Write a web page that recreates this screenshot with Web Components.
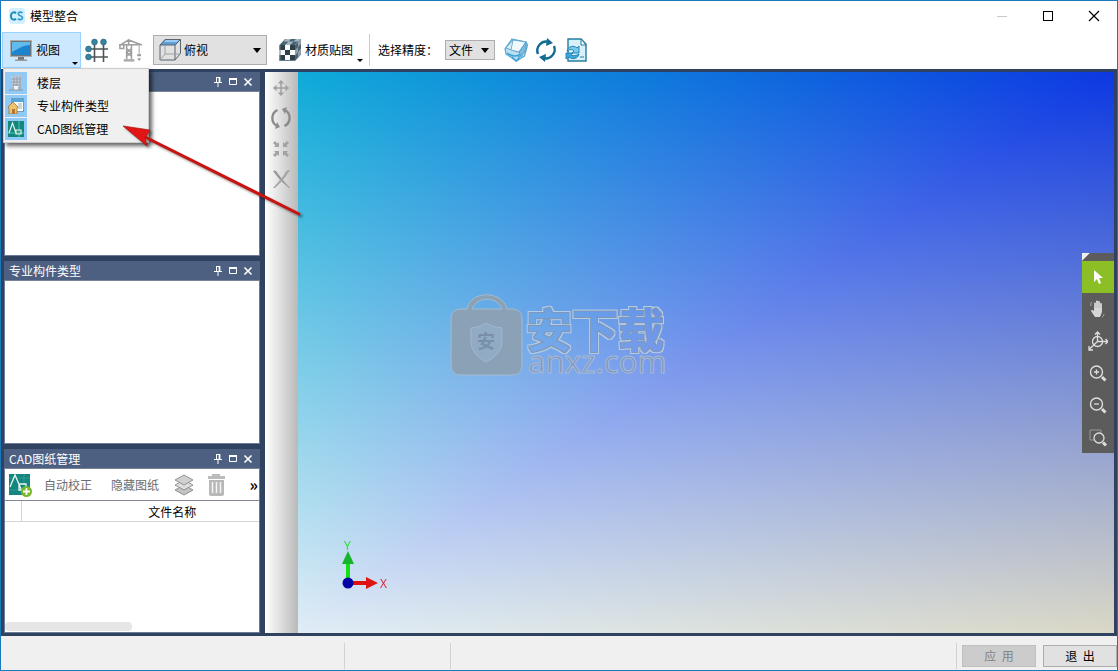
<!DOCTYPE html>
<html lang="zh-CN">
<head>
<meta charset="utf-8">
<title>模型整合</title>
<style>
html,body{height:100%;margin:0}
body{font:12px/16px "Noto Sans CJK SC","Liberation Sans",sans-serif;color:#000;overflow:hidden}
</style>
</head>
<body>
<model-app></model-app>
<script>
const ICONS = {
  logo: ['0 0 16 16', `<rect width="16" height="16" rx="3" fill="#d3effb"/><path d="M7 5.3C5.500 3.500 2 4 2 8s3.500 4.500 5 2.700" fill="none" stroke="#1687b8" stroke-width="1.800"/><path d="M13.500 4.800C12 3.600 9.300 3.800 9.300 5.800c0 2.500 4.200 1.500 4.200 4 0 2.200-3.200 2.200-4.700.8" fill="none" stroke="#2b9fd0" stroke-width="1.700"/>`],
  min: ['0 0 12 12', `<path d="M1 6.500h10" stroke="#c8c8c8"/>`],
  max: ['0 0 12 12', `<rect x="1.500" y="1.500" width="9" height="9" fill="none" stroke="#000"/>`],
  close: ['0 0 12 12', `<path d="M1 1l10 10M11 1L1 11" stroke="#000" stroke-width="1.200"/>`],
  monitor: ['0 0 24 24', `<rect x="1" y="2" width="22" height="17" fill="#6f7478"/><rect x="1.500" y="2.500" width="21" height="16" fill="none" stroke="#a9adb0"/><rect x="3" y="4" width="18" height="13" fill="#1b84cf"/><path d="M3 4h18v3C14 7 9 11 3 14z" fill="#61bbed"/><path d="M9 19h6v3H9z" fill="#777"/><path d="M6 21.500h12V23H6z" fill="#999"/>`],
  grid: ['0 0 24 24', `<path d="M5 11h18M5 19h18M9.500 5v19M18.500 5v19" stroke="#4e5457" stroke-width="1.600"/><g fill="#37849f" stroke="#235d75" stroke-width=".6"><circle cx="3.500" cy="11" r="2.900"/><circle cx="3.500" cy="19" r="2.900"/><circle cx="9.500" cy="4" r="2.900"/><circle cx="18.500" cy="4" r="2.900"/></g>`],
  crane: ['0 0 26 24', `<g fill="none" stroke="#9f9f9f" stroke-width="1.600"><path d="M1 6h24M11 1v6M3 6l8-5 13 5M2 6v4h4V6"/><path d="M9 6v15M14 6v15M9 10l5 4-5 4M14 10l-5 4 5 4"/><path d="M22 7v9" stroke-width="1"/></g><path d="M6 21h11v2.500H6z" fill="#aaa"/><path d="M20 16h4v2h-4zM20 20h4l-2 3z" fill="#999"/>`],
  cube: ['0 0 24 24', `<path d="M7 1.500h15l-4 5.500H2z" fill="#5f9fd8"/><path d="M8 2h13l-2 2H6z" fill="#9dcaf0"/><g fill="none" stroke="#59646e"><path d="M2 7h15v15H2zM2 7l5-5.500h15.500v14L17 22M17 7l5.500-5.500"/><path d="M7 7v9h15M7 16l-5 6" stroke="#9aa2a9"/></g>`],
  checker: ['0 0 24 24', `<path d="M7 1h16l-6 6H1.500z" fill="#4b6474"/><path d="M8 1h5l-2.500 2.500h-5zM18 1h5l-2.500 2.500h-5zM10.500 3.500h5L12 7H7z" fill="#a3b7c4"/><path d="M1.500 7H17v16H1.500z" fill="#fafafa"/><path d="M17 7l6-6v15.500L17 23z" fill="#506370"/><path d="M20 4l3-3v5l-3 3zM17 12l3-3v5l-3 4zM20 14l3-4v6l-3 4z" fill="#8fa0aa"/><g fill="#2e4049"><path d="M1.500 7H7v5H1.500zM12 7h5v5h-5zM7 12h5v5H7zM1.500 17H7v6H1.500zM12 17h5v6h-5z"/></g><path d="M2 7v15.500h15" fill="none" stroke="#68808d"/>`],
  box3d: ['0 0 24 24', `<path d="M8 1l14 3 1.500 3-3 11-8 5L2 16l-1-5z" fill="#b9dff3" stroke="#54a7d3" stroke-width="1.200"/><path d="M9 2L2 10l12 4 7-10z" fill="#d9f0fb" stroke="#6aacd0"/><path d="M9 2L7 12l8 2 7-10z" fill="#f0f9fd" stroke="#5a9dc6" stroke-width=".8"/><path d="M15 14l7-10v7l-5 8z" fill="#7cbbe2" stroke="#4a94c2" stroke-width=".8"/><path d="M3 15c4 3 8 4 12 2v3l-3 3-4-4" fill="none" stroke="#3aa0d6" stroke-width="1.400"/>`],
  refresh: ['0 0 24 24', `<g fill="none" stroke="#136c93" stroke-width="2.400"><path d="M4 16A9 9 0 0 1 15 4"/><path d="M20 8A9 9 0 0 1 9 20"/></g><path d="M13 0l6 5-7 3zM11 24l-6-5 7-3z" fill="#136c93"/>`],
  docsync: ['0 0 24 24', `<path d="M4 1h13l5 5v17H4z" fill="#d7f0fa" stroke="#267d9f" stroke-width="1.400"/><path d="M17 1v6h5z" fill="#fff" stroke="#267d9f"/><path d="M3 13c1-5 7-6 10-3l2-2v7H8l2-2c-2-2-4-2-7 0z" fill="#79c9eb" stroke="#1c7daf" stroke-width=".9"/><path d="M15 16c-1 5-7 6-10 3l-3 2v-6h7l-2 2c2 1 5 1 8-1z" fill="#3da7dc" stroke="#1c7daf" stroke-width=".9"/><path d="M16 19h4" stroke="#287f9f"/>`],
  floor: ['0 0 16 16', `<path d="M3 1l10-1v15H3z" fill="#c3ccd6"/><path d="M6 1v14M9 1v14M12 1v14M3 4h10M3 7h10M3 10h10M3 13h10" stroke="#8c9bab" stroke-width=".8"/><path d="M6 11h4v4H6z" fill="#f3f3f3"/><path d="M1 15h14" stroke="#7c98ae"/>`],
  component: ['0 0 16 16', `<rect x="3.500" y=".5" width="12" height="13" fill="#fff" stroke="#6aa1c2"/><path d="M4 1h11v3H4z" fill="#57a8d8"/><path d="M10 6h4M10 8h4M10 10h4" stroke="#9aa"/><path d="M0 9l5-5 5 5-1 1v6H1v-6z" fill="#edc36e" stroke="#a96b2b" stroke-width=".8"/><path d="M4 11h3v5H4z" fill="#b47832"/>`],
  cad: ['0 0 16 16', `<path d="M0 0h16v16H0z" fill="#14867d"/><path d="M0 12h16M11 0v16" stroke="#50c2ad"/><path d="M1 12L4.500 2 8 12M8 9h5v4H8z" fill="none" stroke="#e3f7ef" stroke-width="1.200"/>`],
  cadadd: ['0 0 24 24', `<path d="M1 1h21v21H1z" fill="#15857f"/><path d="M1 17h21M16 1v21M1 5h21" stroke="#2c9a8e"/><path d="M2 14L7 2l6 14M11 11h7v6h-7z" fill="none" stroke="#e9f8f4" stroke-width="1.300"/><circle cx="18.500" cy="18.500" r="5.500" fill="#79b82c"/><path d="M15 18.500h7M18.500 15v7" stroke="#fff" stroke-width="1.800"/>`],
  layers: ['0 0 24 24', `<g fill="#c4c4c4" stroke="#929292"><path d="M12 12l9 5-9 5-9-5z"/><path d="M12 7l9 5-9 5-9-5z" fill="#ddd"/><path d="M12 2l9 5-9 5-9-5z" fill="#d0d0d0"/></g>`],
  trash: ['0 0 24 24', `<path d="M8 1h8v2h5v3H4V3h4z" fill="#bbb"/><path d="M5 7h15v14q0 2-2 2H7q-2 0-2-2z" fill="#b8b8b8"/><path d="M8.500 9v11M12.500 9v11M16.500 9v11" stroke="#f4f4f4" stroke-width="1.500"/>`],
  pin: ['0 0 10 10', `<path d="M3.500 0v5.500M3 .5h4M1 5.500h8M5 5.500V10" fill="none" stroke="#fff"/><path d="M6.500 0v5" stroke="#fff" stroke-width="1.800"/>`],
  restore: ['0 0 10 10', `<path d="M1.500 1.500h7v6h-7z" fill="none" stroke="#fff"/><path d="M1 2h8" stroke="#fff" stroke-width="2"/>`],
  cross: ['0 0 10 10', `<path d="M1.500 1.500l7 7M8.500 1.500l-7 7" stroke="#fff" stroke-width="1.600"/>`],
  move: ['0 0 20 20', `<path d="M10 3v14M3 10h14" stroke="#a0a0a0" stroke-width="1.600"/><path d="M10 1l3.500 4h-7zM10 19l3.500-4h-7zM1 10l4-3.500v7zM19 10l-4-3.500v7z" fill="#a0a0a0"/>`],
  rotate: ['0 0 22 22', `<g fill="none" stroke="#8c8c8c" stroke-width="2.400"><path d="M7 19A9 9 0 0 1 7.500 3"/><path d="M15 3a9 9 0 0 1-.5 16"/></g><path d="M5 22l5-2-3-5zM17 0l-5 2 3 5z" fill="#8c8c8c"/>`],
  shrink: ['0 0 20 20', `<g fill="#a2a2a2"><path d="M8 8H3l1.500-1.500L2 4l2-2 2.500 2.500L8 3zM12 8h5l-1.500-1.500L18 4l-2-2-2.500 2.500L12 3zM8 12H3l1.500 1.500L2 16l2 2 2.500-2.500L8 17zM12 12h5l-1.500 1.500L18 16l-2 2-2.500-2.500L12 17z"/></g>`],
  del: ['0 0 20 20', `<path d="M2 2q2-1 3 0l6 8 8 9h-1L9 11z" fill="#979797"/><path d="M18 1q-3 0-5 5l-4 5-7 8 2 0 7-7 4-5q2-4 4-5z" fill="#a6a6a6"/>`],
  pointer: ['0 0 20 20', `<path d="M6 3v12l3-3 2 5 2-1-2-5h4z" fill="#fff"/>`],
  hand: ['0 0 20 20', `<path d="M7 18l-4-6q0-1.500 1.500-1L6 12V4q1-1 2 0v5V2q1-1 2 0v7V2.500q1-1 2 0V9V4.500q1-1 2 0V13l-2 5z" fill="#d6d6d6"/><path d="M7 9V4M9 9V3M11 9V3M13 9V5" stroke="#888" stroke-width=".3"/><path d="M3 7q-1-3 1-4M16 15q0 2-2 3" fill="none" stroke="#aaa"/>`],
  orbit: ['0 0 20 20', `<g fill="none" stroke="#ddd" stroke-width="1.300"><circle cx="9.500" cy="10.500" r="5"/><path d="M9.500 11V1M7 3.500L9.500 1 12 3.500M9.500 10.500H20M17.500 8l2.500 2.500-2.500 2.500M9.500 10.500L1 18.500M1 15v4h4"/></g>`],
  zoomin: ['0 0 20 20', `<circle cx="8.500" cy="9" r="6" fill="none" stroke="#ddd" stroke-width="1.400"/><path d="M6 9h5M8.500 6.500v5" stroke="#ddd" stroke-width="1.300"/><path d="M14 14l3.500 3.500" stroke="#ddd" stroke-width="3"/>`],
  zoomout: ['0 0 20 20', `<circle cx="8.500" cy="9" r="6" fill="none" stroke="#ddd" stroke-width="1.400"/><path d="M6 9h5" stroke="#ddd" stroke-width="1.300"/><path d="M14 14l3.500 3.500" stroke="#ddd" stroke-width="3"/>`],
  zoombox: ['0 0 20 20', `<path d="M7 13H2V3h11v4" fill="none" stroke="#999"/><circle cx="11" cy="11" r="5" fill="none" stroke="#ddd" stroke-width="1.300"/><path d="M15 15.500l3 3" stroke="#ddd" stroke-width="3"/>`]
};

class UiIcon extends HTMLElement {
  connectedCallback() {
    const s = this.getAttribute('size') || '16';
    const [box, body] = ICONS[this.getAttribute('name')];
    this.attachShadow({mode:'open'}).innerHTML =
      `<style>:host{display:block;flex:none;width:${s}px;height:${s}px}svg{display:block;width:100%;height:100%}</style>
       <svg viewBox="${box}" aria-hidden="true">${body}</svg>`;
  }
}
customElements.define('ui-icon', UiIcon);

function define(name, html) {
  const t = document.createElement('template');
  t.innerHTML = html;
  customElements.define(name, class extends HTMLElement {
    constructor() {
      super();
      this.attachShadow({mode:'open'}).append(t.content.cloneNode(true));
    }
  });
}

const BUTTON = `*{box-sizing:border-box}button{font:inherit;color:inherit;background:none;border:0;padding:0;margin:0;display:flex;align-items:center}`;

define('title-bar', `<style>${BUTTON}
:host{display:flex;align-items:center;height:30px;padding:0 17px 0 8px;background:#fff;box-sizing:border-box}
h1{font:inherit;margin:0 auto 0 5px}
nav{display:flex;gap:34px}
</style>
<ui-icon name="logo"></ui-icon><h1>模型整合</h1>
<nav><button aria-label="最小化"><ui-icon name="min" size="12"></ui-icon></button>
<button aria-label="最大化"><ui-icon name="max" size="12"></ui-icon></button>
<button aria-label="关闭"><ui-icon name="close" size="12"></ui-icon></button></nav>`);

define('view-menu', `<style>${BUTTON}
:host{display:block;width:146px;padding:2px 1px;background:#f0f0f0;border:1px solid #ccc;box-shadow:3px 3px 4px #0009;box-sizing:border-box}
button{width:100%;height:23px}
span{display:flex;justify-content:center;align-items:center;width:22px;height:22px;background:#91c9f7;margin-right:10px}
</style>
<button role="menuitem"><span><ui-icon name="floor"></ui-icon></span>楼层</button>
<button role="menuitem"><span><ui-icon name="component"></ui-icon></span>专业构件类型</button>
<button role="menuitem"><span><ui-icon name="cad"></ui-icon></span>CAD图纸管理</button>`);

define('drop-down', `<style>
:host{display:block;position:relative;box-sizing:border-box;border:1px solid #adadad;background:#e1e1e1}
:host::after{content:"";position:absolute;right:5px;top:50%;margin-top:-2px;border:4px solid transparent;border-top:5px solid #000;border-bottom:0;pointer-events:none}
::slotted(select){appearance:none;display:block;width:100%;height:100%;font:inherit;color:#000;background:none;border:0;padding:0 0 0 var(--indent,3px);margin:0}
.i{position:absolute;left:4px;top:50%;transform:translateY(-50%);pointer-events:none}
</style><div class="i"><slot name="icon"></slot></div><slot></slot>`);

define('main-toolbar', `<style>${BUTTON}
:host{display:flex;align-items:center;height:38px;padding-left:1px;background:#fff;position:relative;z-index:2}
.view{position:relative;width:79px;height:36px;padding-left:6px;gap:3px;background:#cce8ff;border:1px solid #99d1ff}
.more{position:relative}
.view::after,.more::after{content:"";position:absolute;right:2px;bottom:2px;border:3px solid transparent;border-top-color:#000;border-bottom:0}
.more{height:36px;width:86px;gap:3px}
.more::after{bottom:6px;right:1px}
.tools{display:flex;gap:9px;margin:0 10px 0 4px}
.angle{width:114px;height:30px;margin-right:11px}
.sep{width:1px;height:32px;background:#ccc;margin:0 8px 0 5px}
.precision{width:50px;height:20px;margin:0 9px 0 7px}
label{width:60px;white-space:nowrap}
.end{display:flex;gap:6px}
view-menu{position:absolute;left:2px;top:37px}
</style>
<button class="view" aria-haspopup="menu" aria-expanded="true"><ui-icon name="monitor" size="24"></ui-icon>视图</button>
<div class="tools"><button aria-label="轴网"><ui-icon name="grid" size="24"></ui-icon></button><button aria-label="塔吊"><ui-icon name="crane" size="25"></ui-icon></button></div>
<drop-down class="angle" style="--indent:30px"><ui-icon slot="icon" name="cube" size="24"></ui-icon><select aria-label="视角"><option>俯视</option></select></drop-down>
<button class="more"><ui-icon name="checker" size="24"></ui-icon>材质贴图</button>
<div class="sep"></div>
<label for="p">选择精度：</label>
<drop-down class="precision"><select id="p"><option>文件</option></select></drop-down>
<div class="end"><button aria-label="三维"><ui-icon name="box3d" size="24"></ui-icon></button><button aria-label="刷新"><ui-icon name="refresh" size="24"></ui-icon></button><button aria-label="同步"><ui-icon name="docsync" size="24"></ui-icon></button></div>
<view-menu role="menu"></view-menu>`);

define('dock-panel', `<style>${BUTTON}
:host{display:flex;flex-direction:column;min-height:0;border:1px solid #6b7b98;border-top:0;background:#fff;box-sizing:border-box}
header{display:flex;align-items:center;height:20px;flex:none;margin:0 -1px;padding:0 7px 0 5px;background:#4d6082;color:#fff;gap:5px;border-bottom:1px solid #7a8496}
h2{font:inherit;margin:0 auto 0 0}
</style>
<header><h2><slot name="title"></slot></h2>
<button aria-label="固定"><ui-icon name="pin" size="10"></ui-icon></button><button aria-label="最大化"><ui-icon name="restore" size="10"></ui-icon></button><button aria-label="关闭"><ui-icon name="cross" size="10"></ui-icon></button></header>
<slot></slot>`);

define('drawing-list', `<style>${BUTTON}
:host{display:flex;flex-direction:column;flex:1;min-height:0}
.bar{display:flex;align-items:center;height:32px;flex:none;padding-left:3px;color:#6d6d6d;border-bottom:1px solid #828790}
.bar button:nth-child(2){margin:0 19px 0 12px}
.bar button:nth-child(3){margin-right:13px}
.bar button:nth-child(4){margin-right:8px}
.bar .over{margin-left:auto;color:#000;font-weight:bold;font-size:16px;padding:0 1px 2px 0}
table{width:100%;border-collapse:collapse;table-layout:fixed}
th{font-weight:normal;height:20px;padding:2px 0 0;border-bottom:1px solid #d5d5d5;text-align:center}
th:first-child{width:16px;border-right:1px solid #d5d5d5}
th:last-child{padding-left:64px}
.scroll{margin:auto 0 1px;width:50%;height:9px;border-radius:4px;background:#e6e6e6}
</style>
<div class="bar"><button aria-label="添加图纸"><ui-icon name="cadadd" size="24"></ui-icon></button><button>自动校正</button><button>隐藏图纸</button><button aria-label="图层"><ui-icon name="layers" size="24"></ui-icon></button><button aria-label="删除"><ui-icon name="trash" size="24"></ui-icon></button><button class="over" aria-label="更多">»</button></div>
<table><thead><tr><th></th><th>文件名称</th></tr></thead></table>
<div class="scroll"></div>`);

define('edit-strip', `<style>${BUTTON}
:host{display:flex;flex-direction:column;align-items:center;gap:10px;width:33px;flex:none;padding:7px 1px 0 0;background:linear-gradient(90deg,#fff,#e4e4e4 40%,#b9b9b9);box-sizing:border-box}
</style>
<button aria-label="移动"><ui-icon name="move" size="18"></ui-icon></button><button aria-label="旋转"><ui-icon name="rotate" size="22"></ui-icon></button><button aria-label="缩放"><ui-icon name="shrink" size="20"></ui-icon></button><button aria-label="删除"><ui-icon name="del" size="20"></ui-icon></button>`);

define('nav-tools', `<style>${BUTTON}
:host{display:block;width:32px;background:linear-gradient(135deg,#eee 5px,#5c5c5c 6px)}
.grip{height:8px}
button{width:32px;height:32px;justify-content:center}
.on{background:#8cbf26}
</style><div class="grip"></div>
<button class="on" aria-label="选择"><ui-icon name="pointer" size="20"></ui-icon></button><button aria-label="平移"><ui-icon name="hand" size="20"></ui-icon></button><button aria-label="旋转"><ui-icon name="orbit" size="20"></ui-icon></button><button aria-label="放大"><ui-icon name="zoomin" size="20"></ui-icon></button><button aria-label="缩小"><ui-icon name="zoomout" size="20"></ui-icon></button><button aria-label="窗选缩放"><ui-icon name="zoombox" size="20"></ui-icon></button>`);

/* Background: two triangles shaded between four corner colours,
   split along the top-right to bottom-left diagonal. */
define('model-view', `<style>
:host{display:block;position:relative;flex:1;min-width:0;overflow:hidden;isolation:isolate;
--tl:#0eaad8;--tr:#0c38e2;--bl:#e0edf6;--br:#dad8c6;
background:linear-gradient(to bottom right,var(--tl),#000 50%,var(--br))}
:host::before,:host::after{content:"";position:absolute;inset:0;mix-blend-mode:plus-lighter;background-blend-mode:darken}
:host::before{background-image:linear-gradient(to right,#000,var(--tr)),linear-gradient(to top,#000,var(--tr))}
:host::after{background-image:linear-gradient(to bottom,#000,var(--bl)),linear-gradient(to left,#000,var(--bl))}
.axis{position:absolute;left:42px;bottom:32px;z-index:1}
nav-tools{position:absolute;right:0;top:50%;transform:translateY(-50%);z-index:1}
</style>
<svg class="axis" width="56" height="68" viewBox="0 -6 56 68" font-family="Open Sans" font-size="12"><path d="M6 25h4v22H6z" fill="#14e014"/><path d="M8 12l6 13H2z" fill="#17b52b"/><path d="M8 42h18v4H8z" fill="#e01010"/><path d="M38 44l-12-6v12z" fill="#dc1414"/><circle cx="8" cy="44" r="5.500" fill="#0505a5"/><text x="4" y="11" fill="#20e020">Y</text><text x="40" y="49" fill="#e02030">X</text></svg>
<nav-tools></nav-tools>`);

define('water-mark', `<style>:host{display:block;pointer-events:none}svg{display:block}</style>
<svg width="218" height="108" viewBox="0 -12 218 108">
<filter id="outline" x="-5%" y="-10%" width="110%" height="120%">
<feMorphology in="SourceAlpha" operator="dilate" radius="2" result="wide"/>
<feMorphology in="SourceAlpha" operator="dilate" radius="1" result="mid"/>
<feFlood flood-color="#b4cbe6"/><feComposite in2="wide" operator="in" result="light"/>
<feFlood flood-color="#8097b8"/><feComposite in2="mid" operator="in" result="dark"/>
<feMerge result="both"><feMergeNode in="light"/><feMergeNode in="dark"/></feMerge>
<feComposite in="both" in2="SourceAlpha" operator="out"/>
</filter>
<path d="M17 15C20-4 53-4 57 15h5q10 0 10 10v46q0 10-10 10H11q-10 0-10-10V25q0-10 10-10zM22 15h30C47 2 27 2 22 15z" fill="#8ba1b6" stroke="#a3bbd0" fill-rule="evenodd"/>
<path d="M36 29q8 5 16 5v14q0 12-16 20-15-8-15-20V34q8 0 15-5z" fill="#91abc5" stroke="#a0b9d0"/>
<text x="27" y="54" font-family="Liberation Sans, Noto Sans CJK SC" font-weight="bold" font-size="18" fill="#7990a8">安</text>
<text x="76" y="53" font-family="Liberation Sans, Noto Sans CJK SC" font-weight="bold" font-size="46" filter="url(#outline)">安下载</text>
<text x="78" y="79" font-family="Noto Sans" font-size="31" fill="#8299bd" stroke="#a5b9da" stroke-width="1">anxz.com</text>
</svg>`);

define('callout-arrow', `<style>:host{display:block;pointer-events:none}svg{display:block;filter:drop-shadow(2px 2px 1px #0006)}</style>
<svg width="184" height="94" viewBox="0 0 184 94"><path d="M24 12L178 89" stroke="#c9130f" stroke-width="3" stroke-linecap="round"/><path d="M2 1l27 4-5 8 2 8z" fill="#e31414" stroke="#a31414" stroke-width=".7"/></svg>`);

define('status-bar', `<style>*{box-sizing:border-box}
:host{display:flex;align-items:center;height:34px;flex:none;padding:6px 0 0;background:#f0f0f0;box-sizing:border-box}
.cell{height:26px;border-right:1px solid #d2d2d2}
.a{width:344px}.b{width:106px}.c{flex:1}
button{font:inherit;width:74px;height:22px;padding:0;border:1px solid #adadad;background:#e1e1e1;color:#000;white-space:pre}
button:disabled{background:#ccc;border-color:#bfbfbf;color:#838383;margin:0 7px 0 5px}
</style><div class="cell a"></div><div class="cell b"></div><div class="cell c"></div><button disabled>应  用</button><button>退  出</button>`);

define('model-app', `<style>
:host{display:flex;flex-direction:column;position:relative;height:100vh;box-sizing:border-box;border:1px solid #1979ba;background:#f0f0f0;overflow:hidden}
title-bar,main-toolbar{flex:none}
main{display:flex;flex:1;min-height:0;padding:3px;background:#2f4260;box-sizing:border-box}
aside{display:grid;grid-template-rows:184fr 183fr 184fr;gap:5px;width:256px;flex:none;margin-right:5px}
water-mark{position:absolute;left:50%;top:50%;transform:translate(-50%,-50%)}
callout-arrow{position:absolute;left:120px;top:124px;z-index:3}
</style>
<title-bar></title-bar><main-toolbar></main-toolbar>
<main><aside>
<dock-panel><span slot="title">楼层</span></dock-panel>
<dock-panel><span slot="title">专业构件类型</span></dock-panel>
<dock-panel><span slot="title">CAD图纸管理</span><drawing-list></drawing-list></dock-panel>
</aside><edit-strip></edit-strip><model-view></model-view></main>
<status-bar></status-bar><water-mark></water-mark><callout-arrow></callout-arrow>`);
</script>
</body>
</html>
